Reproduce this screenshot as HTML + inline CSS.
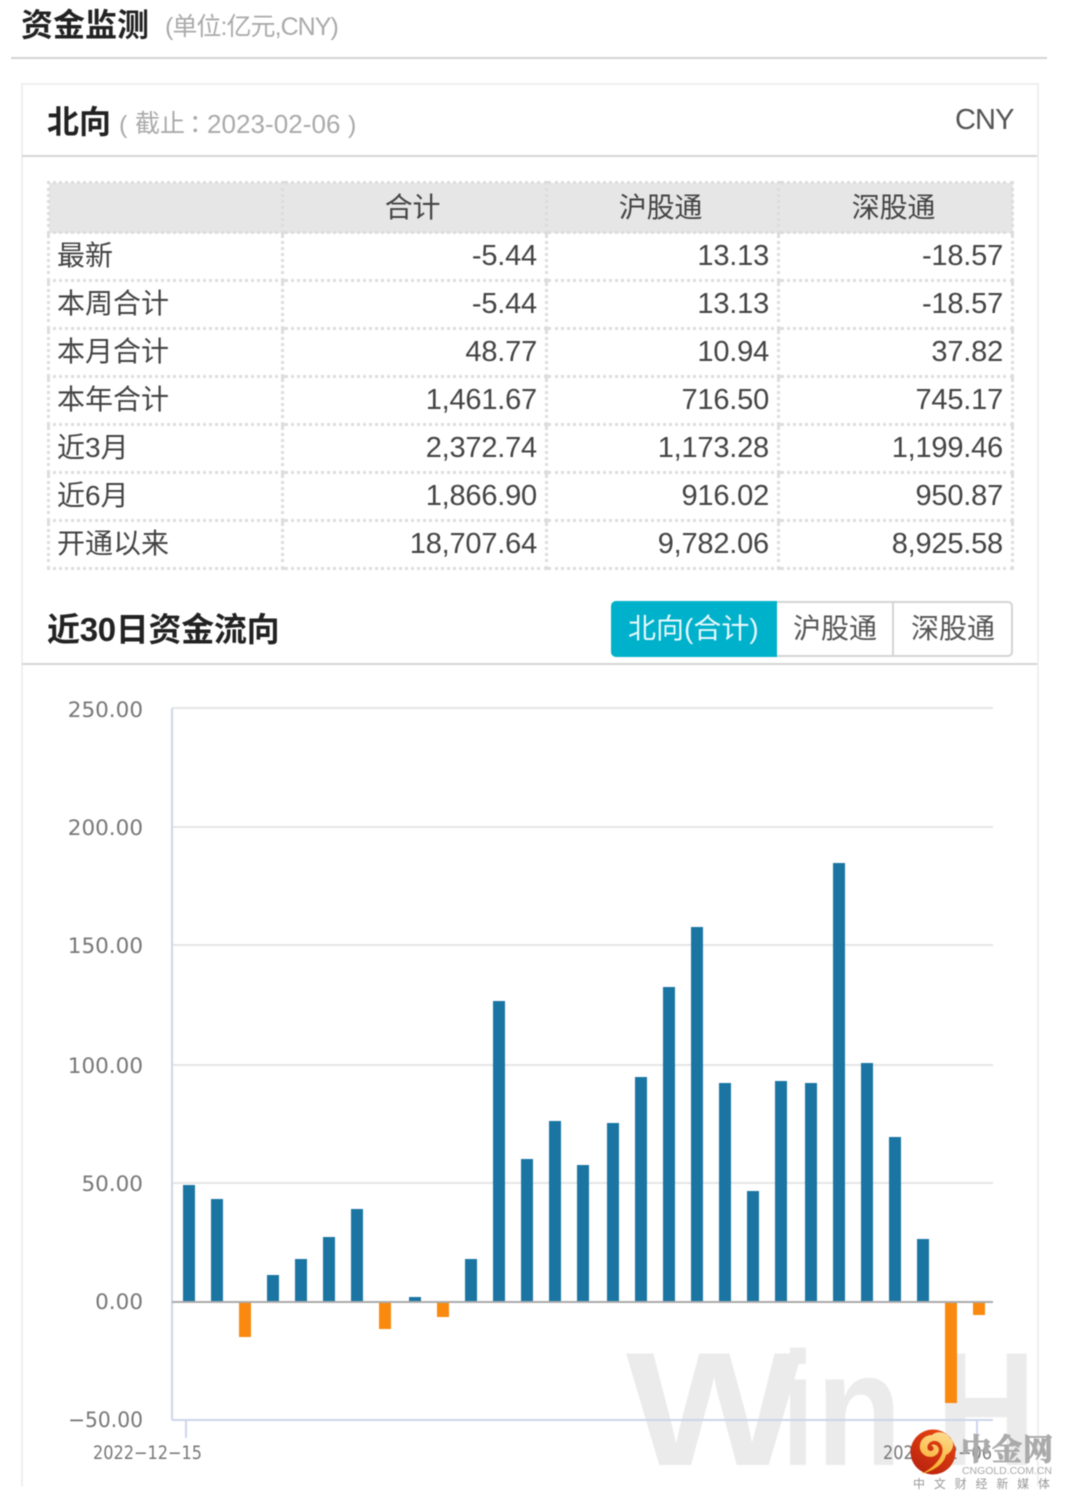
<!DOCTYPE html>
<html lang="zh"><head><meta charset="utf-8"><title>资金监测</title>
<style>
html,body{margin:0;padding:0;background:#fff}
#p{position:relative;width:1067px;height:1502px;overflow:hidden;background:#fff;font-family:"Liberation Sans","Noto Sans CJK SC",sans-serif;filter:blur(.55px)}
.a{position:absolute;white-space:nowrap;line-height:1}
table{position:absolute;left:47px;top:181px;width:964px;border-collapse:collapse;table-layout:fixed;font-size:28px;color:#444}
td{border:3px dotted #ddd;padding:0 8px;box-sizing:border-box;height:48px;text-align:right;font-size:29px;letter-spacing:-.2px}
td:first-child{text-align:left;font-size:28px;letter-spacing:0;padding-left:7px}
td:first-child span{position:relative;top:-3px}
tr.h td{height:50px;background:#e6e6e6;text-align:center;font-size:28px;border-color:#dcdcdc}
tr.h td span{position:relative;top:-2px;left:-2px}
</style></head><body><div id="p">
<div class="a" style="left:21px;top:9px;font-size:32px;font-weight:700;color:#222">资金监测</div>
<div class="a" style="left:165px;top:15px;font-size:25px;color:#aaa;letter-spacing:-.95px">(单位:亿元,CNY)</div>
<div class="a" style="left:11px;top:57px;width:1036px;height:2px;background:#d4d4d4"></div>
<div class="a" style="left:21px;top:83px;width:1014px;height:1401px;border:solid #eee;border-width:2px 2px 0 2px"></div>
<div class="a" style="left:47px;top:106px;font-size:32px;font-weight:700;color:#222">北向</div>
<div class="a" style="left:119px;top:113px;font-size:25px;color:#aaa">(</div>
<div class="a" style="left:135px;top:112px;font-size:25px;color:#aaa">截止</div>
<div class="a" style="left:189px;top:112px;font-size:25px;color:#aaa">：</div>
<div class="a" style="left:207px;top:111px;font-size:26px;color:#aaa;letter-spacing:.05px">2023-02-06</div>
<div class="a" style="left:348px;top:113px;font-size:25px;color:#aaa">)</div>
<div class="a" style="left:955px;top:106px;font-size:29px;color:#555;letter-spacing:-.9px">CNY</div>
<div class="a" style="left:22px;top:155px;width:1015px;height:2px;background:#d6d6d6"></div>
<table><colgroup><col style="width:234px"><col style="width:264px"><col style="width:232px"><col style="width:234px"></colgroup>
<tr class="h"><td></td><td><span>合计</span></td><td><span>沪股通</span></td><td><span>深股通</span></td></tr>
<tr><td><span>最新</span></td><td>-5.44</td><td>13.13</td><td>-18.57</td></tr>
<tr><td><span>本周合计</span></td><td>-5.44</td><td>13.13</td><td>-18.57</td></tr>
<tr><td><span>本月合计</span></td><td>48.77</td><td>10.94</td><td>37.82</td></tr>
<tr><td><span>本年合计</span></td><td>1,461.67</td><td>716.50</td><td>745.17</td></tr>
<tr><td><span>近3月</span></td><td>2,372.74</td><td>1,173.28</td><td>1,199.46</td></tr>
<tr><td><span>近6月</span></td><td>1,866.90</td><td>916.02</td><td>950.87</td></tr>
<tr><td><span>开通以来</span></td><td>18,707.64</td><td>9,782.06</td><td>8,925.58</td></tr>
</table>
<div class="a" style="left:47px;top:613px;font-size:33px;font-weight:700;color:#222;letter-spacing:-.3px">近30日资金流向</div>
<div class="a" style="left:611px;top:601px;width:398px;height:52px;border:2px solid #d4d4d4;border-radius:5px"></div>
<div class="a" style="left:611px;top:601px;width:166px;height:56px;background:#00b1cb;border-radius:5px 0 0 5px"></div>
<div class="a" style="left:892px;top:601px;width:2px;height:56px;background:#d4d4d4"></div>
<div class="a" style="left:628px;top:615px;font-size:28px;color:#e6f8fb">北向(合计)</div>
<div class="a" style="left:793px;top:615px;font-size:28px;color:#555">沪股通</div>
<div class="a" style="left:911px;top:615px;font-size:28px;color:#555">深股通</div>
<div class="a" style="left:22px;top:663px;width:1015px;height:2px;background:#d6d6d6"></div>
<svg class="a" style="left:0;top:0" width="1067" height="1502" viewBox="0 0 1067 1502">
<g font-family="Liberation Sans" font-weight="700" font-size="162" fill="#ebebeb">
<text x="626" y="1465" textLength="176" lengthAdjust="spacingAndGlyphs">W</text>
<text x="782" y="1465" textLength="32" lengthAdjust="spacingAndGlyphs">i</text>
<text x="816" y="1465" textLength="86" lengthAdjust="spacingAndGlyphs">n</text>
<text x="936" y="1465" textLength="100" lengthAdjust="spacingAndGlyphs">H</text>
</g>
<g stroke="#e6e6e6" stroke-width="2">
<path d="M172 708H993M172 827H993M172 945H993M172 1065H993M172 1183H993"/>
</g>
<path d="M172 708V1420M172 1420H993M186 1420V1438M977 1420V1438" stroke="#ccd6eb" stroke-width="2" fill="none"/>
<g fill="#1a75a2">
<rect x="183" y="1185" width="12" height="117"/>
<rect x="211" y="1199" width="12" height="103"/>
<rect x="267" y="1275" width="12" height="27"/>
<rect x="295" y="1259" width="12" height="43"/>
<rect x="323" y="1237" width="12" height="65"/>
<rect x="351" y="1209" width="12" height="93"/>
<rect x="409" y="1297" width="12" height="5"/>
<rect x="465" y="1259" width="12" height="43"/>
<rect x="493" y="1001" width="12" height="301"/>
<rect x="521" y="1159" width="12" height="143"/>
<rect x="549" y="1121" width="12" height="181"/>
<rect x="577" y="1165" width="12" height="137"/>
<rect x="607" y="1123" width="12" height="179"/>
<rect x="635" y="1077" width="12" height="225"/>
<rect x="663" y="987" width="12" height="315"/>
<rect x="691" y="927" width="12" height="375"/>
<rect x="719" y="1083" width="12" height="219"/>
<rect x="747" y="1191" width="12" height="111"/>
<rect x="775" y="1081" width="12" height="221"/>
<rect x="805" y="1083" width="12" height="219"/>
<rect x="833" y="863" width="12" height="439"/>
<rect x="861" y="1063" width="12" height="239"/>
<rect x="889" y="1137" width="12" height="165"/>
<rect x="917" y="1239" width="12" height="63"/>
</g>
<g fill="#f98a0f">
<rect x="239" y="1302" width="12" height="35"/>
<rect x="379" y="1302" width="12" height="27"/>
<rect x="437" y="1302" width="12" height="15"/>
<rect x="945" y="1302" width="12" height="101"/>
<rect x="973" y="1302" width="12" height="13"/>
</g>
<path d="M172 1302H993" stroke="#aaa" stroke-width="2"/>
<g font-family="DejaVu Sans" font-size="21.5" fill="#777" text-anchor="end">
<text x="143" y="717">250.00</text>
<text x="143" y="835">200.00</text>
<text x="143" y="953">150.00</text>
<text x="143" y="1073">100.00</text>
<text x="143" y="1191">50.00</text>
<text x="143" y="1309">0.00</text>
<text x="143" y="1427" textLength="75" lengthAdjust="spacingAndGlyphs">−50.00</text>
</g>
<g font-family="DejaVu Sans" font-size="18.5" fill="#777">
<text x="93" y="1459" textLength="109" lengthAdjust="spacingAndGlyphs">2022−12−15</text>
<text x="883" y="1459" textLength="109" lengthAdjust="spacingAndGlyphs">2023−02−06</text>
</g>
<defs><linearGradient id="g" x1="0.8" y1="0" x2="0.2" y2="1"><stop offset="0" stop-color="#e8480f"/><stop offset="1" stop-color="#b8200f"/></linearGradient>
<linearGradient id="y" x1="0.5" y1="0" x2="0.3" y2="1"><stop offset="0" stop-color="#fdd98a"/><stop offset="1" stop-color="#f7a81d"/></linearGradient></defs>
<text x="961" y="1460" font-family="Liberation Serif,Noto Serif CJK SC,serif" font-weight="700" font-size="30" fill="#aaa" stroke="#aaa" stroke-width="1" textLength="92">中金网</text>
<text x="962" y="1474" font-family="Liberation Sans" font-size="10.5" fill="#aaa" textLength="90">CNGOLD.COM.CN</text>
<text x="913" y="1488" font-family="Liberation Sans,Noto Sans CJK SC,sans-serif" font-size="12" fill="#999" textLength="137">中文财经新媒体</text>
<circle cx="933" cy="1452" r="22.5" fill="url(#g)"/>
<path d="M921 1474C934 1471 944 1464 946 1455C953 1452 956 1442 950 1438C946 1431 936 1431 932 1435C924 1435 919 1441 920 1449C922 1457 933 1460 938 1453C941 1448 936 1443 931 1445C934 1447 935 1450 931 1451C926 1451 926 1443 933 1441C941 1440 945 1449 941 1456C936 1465 929 1470 921 1474Z" fill="url(#y)"/>
</svg>
</div></body></html>
